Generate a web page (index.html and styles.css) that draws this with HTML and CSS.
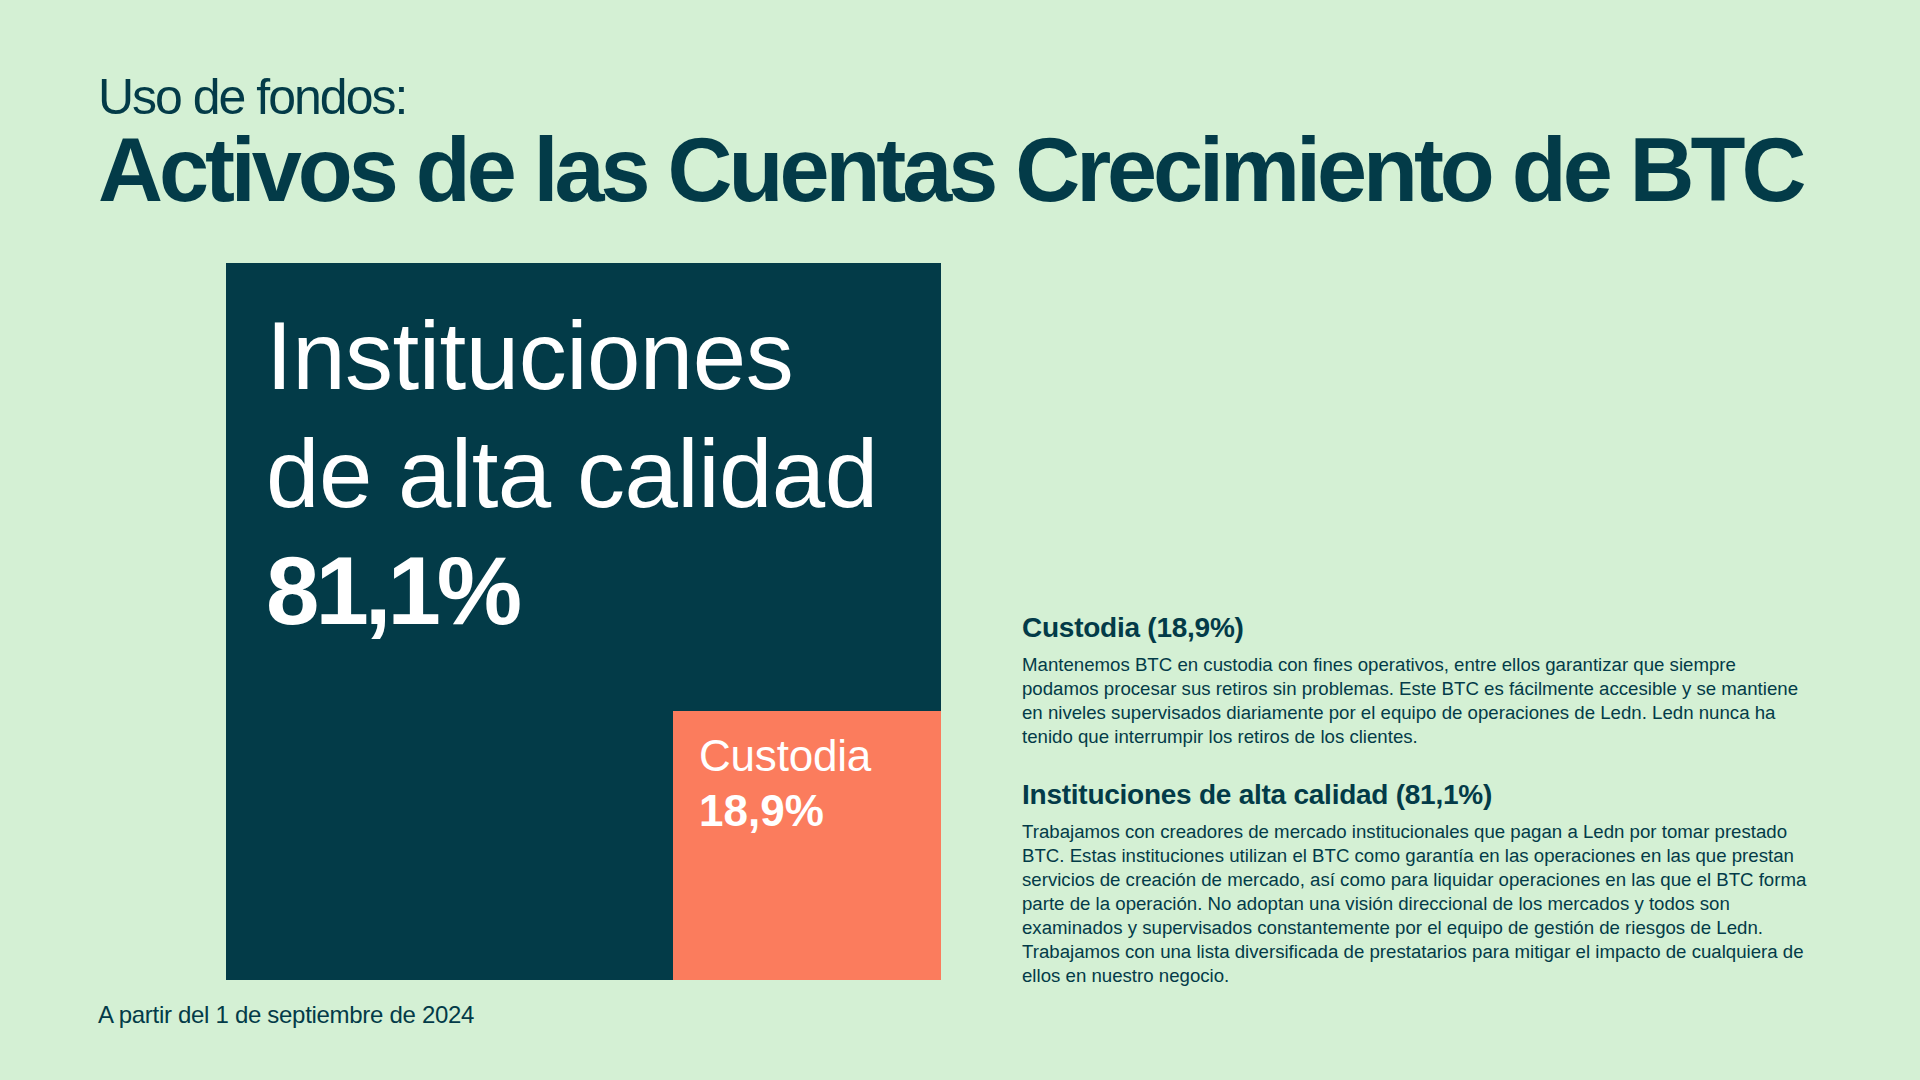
FILE: index.html
```html
<!DOCTYPE html>
<html lang="es">
<head>
<meta charset="utf-8">
<title>Uso de fondos</title>
<link rel="stylesheet" href="styles.css">
</head>
<body>
<main class="slide">
  <header class="head">
    <p class="kicker">Uso de fondos:</p>
    <h1 class="title">Activos de las Cuentas Crecimiento de BTC</h1>
  </header>
  <section class="content">
    <div class="treemap">
      <div class="tile-main">
        <p class="tile-label">Instituciones<br>de alta calidad</p>
        <p class="tile-value">81,1%</p>
      </div>
      <div class="tile-small">
        <p class="small-label">Custodia</p>
        <p class="small-value">18,9%</p>
      </div>
    </div>
    <div class="notes">
      <article class="note">
        <h2 class="note-title">Custodia (18,9%)</h2>
        <p class="note-body">Mantenemos BTC en custodia con fines operativos, entre ellos garantizar que siempre<br>podamos procesar sus retiros sin problemas. Este BTC es fácilmente accesible y se mantiene<br>en niveles supervisados diariamente por el equipo de operaciones de Ledn. Ledn nunca ha<br>tenido que interrumpir los retiros de los clientes.</p>
      </article>
      <article class="note note-second">
        <h2 class="note-title">Instituciones de alta calidad (81,1%)</h2>
        <p class="note-body">Trabajamos con creadores de mercado institucionales que pagan a Ledn por tomar prestado<br>BTC. Estas instituciones utilizan el BTC como garantía en las operaciones en las que prestan<br>servicios de creación de mercado, así como para liquidar operaciones en las que el BTC forma<br>parte de la operación. No adoptan una visión direccional de los mercados y todos son<br>examinados y supervisados constantemente por el equipo de gestión de riesgos de Ledn.<br>Trabajamos con una lista diversificada de prestatarios para mitigar el impacto de cualquiera de<br>ellos en nuestro negocio.</p>
      </article>
    </div>
  </section>
  <footer class="foot">A partir del 1 de septiembre de 2024</footer>
</main>
</body>
</html>
```

FILE: styles.css
```css
* {
  box-sizing: border-box;
}

html, body {
  margin: 0;
  padding: 0;
}

body {
  width: 1920px;
  height: 1080px;
  overflow: hidden;
  background: #d4f0d4;
  color: #033b48;
  font-family: "Liberation Sans", Arial, sans-serif;
}

p, h1, h2 {
  margin: 0;
}

.slide {
  padding: 72px 0 0 98px;
}

.kicker {
  font-size: 50px;
  line-height: 50px;
  letter-spacing: -2px;
  font-weight: 400;
}

.title {
  margin-top: 3px;
  font-size: 90px;
  line-height: 90px;
  font-weight: 700;
  letter-spacing: -4.05px;
  white-space: nowrap;
}

.content {
  display: flex;
  align-items: flex-start;
  margin-top: 48px;
}

.treemap {
  margin-left: 128px;
  width: 715px;
  height: 717px;
  background: #033b48;
  display: flex;
  flex-direction: column;
  color: #ffffff;
}

.tile-main {
  padding: 34px 0 0 40px;
}

.tile-label {
  font-size: 96px;
  line-height: 117.5px;
  letter-spacing: -0.5px;
  white-space: nowrap;
}

.tile-value {
  font-size: 96px;
  line-height: 117.5px;
  font-weight: 700;
  letter-spacing: -4px;
}

.tile-small {
  margin-top: auto;
  align-self: flex-end;
  width: 268px;
  height: 269px;
  background: #fb7c5d;
  padding: 17px 0 0 26px;
}

.small-label {
  font-size: 44px;
  line-height: 55px;
  letter-spacing: -0.2px;
}

.small-value {
  font-size: 44px;
  line-height: 55px;
  font-weight: 700;
}

.notes {
  margin-left: 81px;
  padding-top: 349px;
}

.note-title {
  font-size: 28px;
  line-height: 32px;
  font-weight: 700;
  letter-spacing: -0.25px;
  white-space: nowrap;
}

.note-body {
  margin-top: 9px;
  font-size: 18.65px;
  line-height: 24px;
  white-space: nowrap;
}

.note-second {
  margin-top: 30px;
}

.foot {
  margin-top: 12px;
  font-size: 24px;
  line-height: 30px;
  letter-spacing: -0.3px;
}
```
